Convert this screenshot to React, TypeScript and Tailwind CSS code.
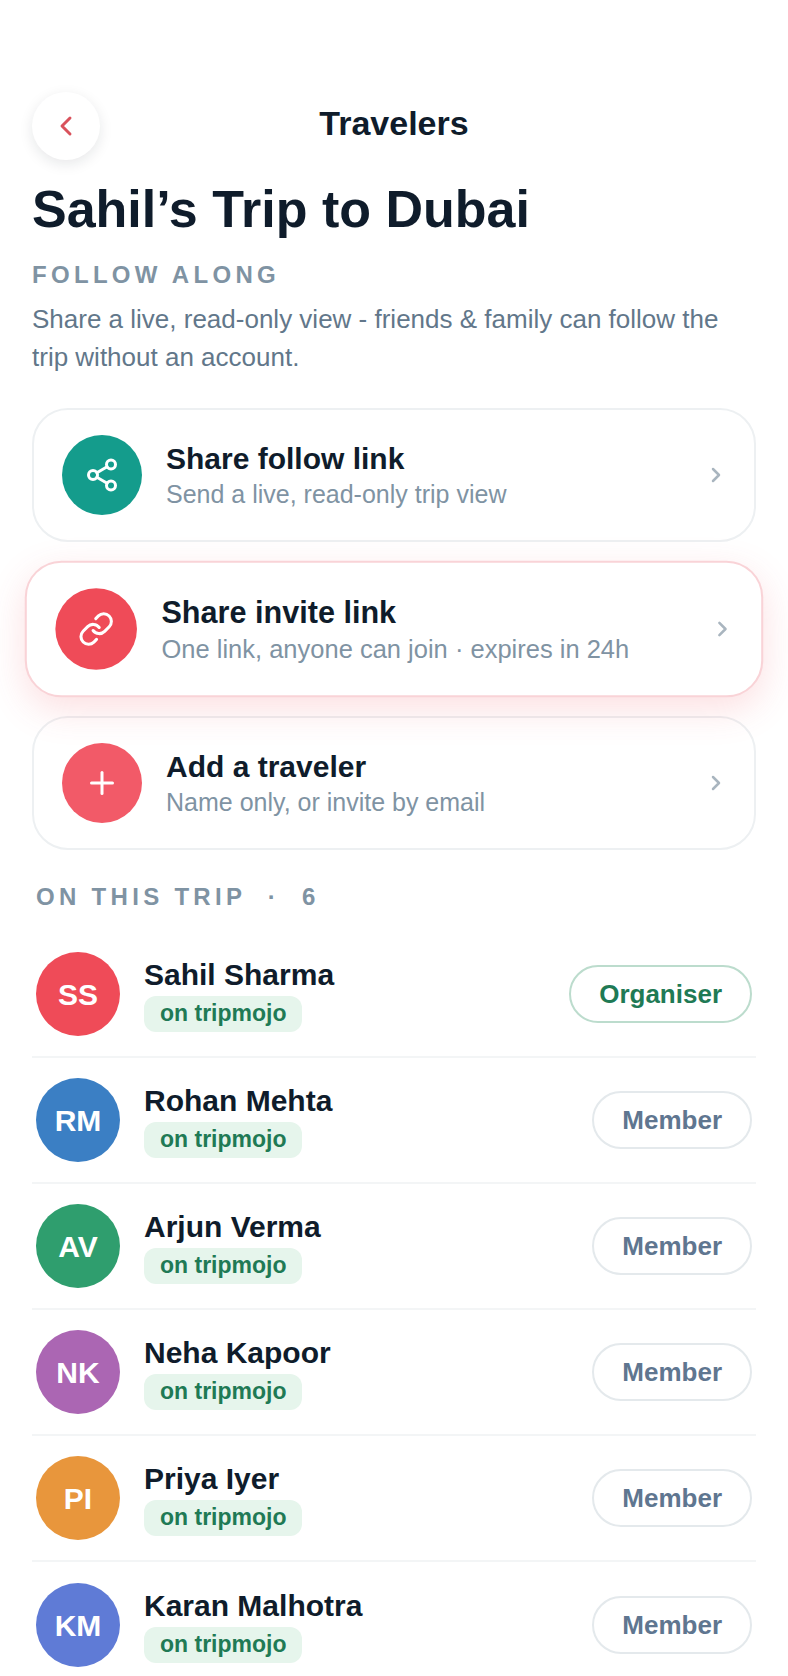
import { ChevronLeft, ChevronRight, Link, Plus, Share2 } from 'lucide-react';

const actions = [
  { title: 'Share follow link', sub: 'Send a live, read-only trip view', icon: Share2, bg: 'bg-[#149c8c]', active: false },
  { title: 'Share invite link', sub: 'One link, anyone can join · expires in 24h', icon: Link, bg: 'bg-[#ef4b58]', active: true },
  { title: 'Add a traveler', sub: 'Name only, or invite by email', icon: Plus, bg: 'bg-[#f25a68]', active: false },
];

const travelers = [
  { initials: 'SS', name: 'Sahil Sharma', color: 'bg-[#ef4b58]', role: 'Organiser' },
  { initials: 'RM', name: 'Rohan Mehta', color: 'bg-[#3b7fc4]', role: 'Member' },
  { initials: 'AV', name: 'Arjun Verma', color: 'bg-[#2f9e6e]', role: 'Member' },
  { initials: 'NK', name: 'Neha Kapoor', color: 'bg-[#ab66b3]', role: 'Member' },
  { initials: 'PI', name: 'Priya Iyer', color: 'bg-[#e8963c]', role: 'Member' },
  { initials: 'KM', name: 'Karan Malhotra', color: 'bg-[#5f7bd6]', role: 'Member' },
];

export default function App() {
  return (
    <div className="h-[1676px] overflow-hidden bg-white px-8 pt-[92px] font-['Liberation_Sans',sans-serif] text-[#0f1c2b]">
      {/* Header */}
      <div className="relative flex h-[68px] items-center justify-center">
        <button className="absolute left-0 top-0 flex h-[68px] w-[68px] items-center justify-center rounded-full bg-white shadow-[0_4px_14px_rgba(15,28,43,0.10)]">
          <ChevronLeft className="h-8 w-8 text-[#d9525c]" strokeWidth={2.2} />
        </button>
        <h2 className="text-[34px] leading-[50px] font-bold -translate-y-[3px]">Travelers</h2>
      </div>

      <h1 className="mt-[18px] text-[52px] leading-[62px] font-bold">Sahil’s Trip to Dubai</h1>

      <p className="mt-[20px] text-[24px] leading-[30px] font-bold tracking-[4.3px] text-[#7f93a3]">FOLLOW ALONG</p>
      <p className="mt-[10px] text-[26px] leading-[38px] text-[#62778a]">
        Share a live, read-only view - friends &amp; family can follow the trip without an account.
      </p>

      {/* Actions */}
      <div className="mt-[32px] flex flex-col gap-[20px]">
        {actions.map((a) => {
          const Icon = a.icon;
          return (
            <div
              key={a.title}
              className={
                a.active
                  ? 'relative z-10 flex h-[134px] scale-[1.02] items-center rounded-[36px] border-2 border-[#f9d3d7] bg-white pl-[28px] pr-[26px] shadow-[0_12px_36px_rgba(239,75,88,0.18)]'
                  : 'flex h-[134px] items-center rounded-[36px] border-2 border-[#edf0f2] bg-white pl-[28px] pr-[26px]'
              }
            >
              <div className={`flex h-[80px] w-[80px] shrink-0 items-center justify-center rounded-full text-white ${a.bg}`}>
                <Icon className="h-9 w-9" strokeWidth={2} />
              </div>
              <div className="ml-6 flex-1">
                <div className="text-[30px] leading-[38px] font-bold">{a.title}</div>
                <div className="text-[25px] leading-[32px] text-[#7f93a3]">{a.sub}</div>
              </div>
              <ChevronRight className="h-6 w-6 text-[#a9b5bf]" strokeWidth={2.5} />
            </div>
          );
        })}
      </div>

      {/* Travelers */}
      <p className="mt-[32px] pl-1 text-[24px] leading-[30px] font-bold tracking-[4.3px] whitespace-pre text-[#7f93a3]">ON THIS TRIP  ·  6</p>

      <div className="mt-[20px]">
        {travelers.map((t) => (
          <div key={t.name} className="flex h-[126px] items-center border-b-2 border-[#f3f5f6] pl-1 pr-1 last:border-b-0">
            <div className={`flex h-[84px] w-[84px] shrink-0 items-center justify-center rounded-full text-[30px] font-bold text-white ${t.color}`}>
              {t.initials}
            </div>
            <div className="ml-6 flex-1">
              <div className="text-[30px] leading-[38px] font-bold">{t.name}</div>
              <span className="mt-[2px] inline-block h-[36px] rounded-[12px] bg-[#e6f5ec] px-4 text-[23px] leading-[34px] font-bold text-[#1f7a55]">
                on tripmojo
              </span>
            </div>
            <span
              className={
                t.role === 'Organiser'
                  ? 'rounded-full border-2 border-[#bcdccd] bg-white px-7 text-[26px] leading-[54px] font-bold text-[#1f7a55]'
                  : 'rounded-full border-2 border-[#e4e9ec] bg-white px-7 text-[26px] leading-[54px] font-bold text-[#5f7690]'
              }
            >
              {t.role}
            </span>
          </div>
        ))}
      </div>
    </div>
  );
}
